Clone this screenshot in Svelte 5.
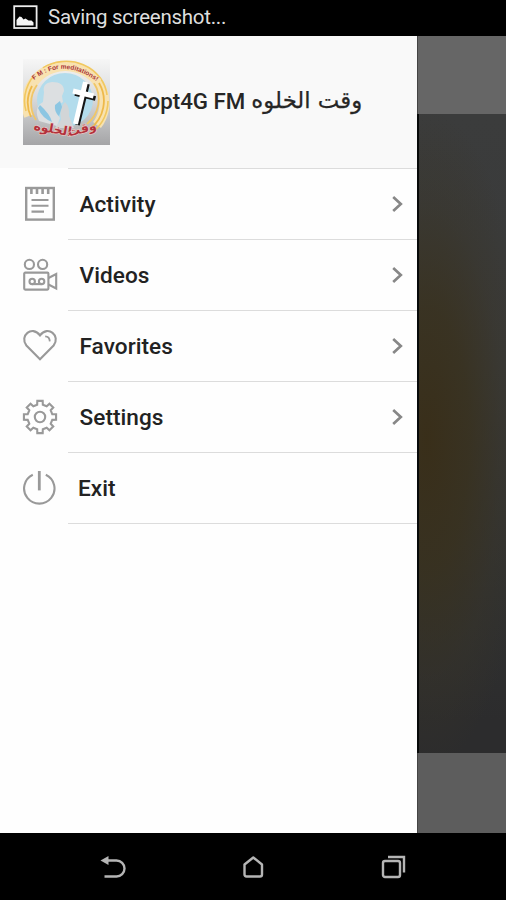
<script>
  const items = [
    { label: 'Activity', icon: 'activity', more: true },
    { label: 'Videos', icon: 'videos', more: true },
    { label: 'Favorites', icon: 'favorites', more: true },
    { label: 'Settings', icon: 'settings', more: true },
    { label: 'Exit', icon: 'exit', more: false }
  ];

  // Outline of an eight-toothed gear centred on 0,0
  const gear = (() => {
    const pts = [];
    for (let i = 0; i < 8; i++) {
      const base = i * 45;
      for (const [r, a] of [[12.6, -13], [16.3, -9.5], [16.3, 9.5], [12.6, 13]]) {
        const t = ((base + a) * Math.PI) / 180;
        pts.push(`${(r * Math.sin(t)).toFixed(2)} ${(-r * Math.cos(t)).toFixed(2)}`);
      }
    }
    return 'M' + pts.join('L') + 'Z';
  })();
</script>

<div class="screen">
  <header class="status">
    <svg class="photo" width="25" height="25" viewBox="0 0 25 25">
      <rect x="1.2" y="1.2" width="22.4" height="21.8" fill="none" stroke="#ececec" stroke-width="1.8" />
      <path d="M3.5 20.5V15l3-3.500 2 .5 2 2.500 2-1 3 2h3l2 2v3z" fill="#f4f4f4" />
    </svg>
    <span>Saving screenshot...</span>
  </header>

  <main>
    <nav class="drawer">
      <div class="profile">
        <svg class="logo" width="87" height="86" viewBox="0 0 87 86">
          <defs>
            <linearGradient id="bg" x1="0" y1="0" x2="0" y2="1">
              <stop offset="0" stop-color="#f6f6f6" />
              <stop offset=".45" stop-color="#d9dadb" />
              <stop offset="1" stop-color="#a5a5a7" />
            </linearGradient>
            <path id="top" d="M11 21Q42 -4 80 27" />
          </defs>
          <rect width="87" height="86" fill="url(#bg)" />
          <g fill="none">
            <path d="M6 57A39 37 0 1 1 74 66" stroke="#f8e2b0" stroke-width="10" />
            <path d="M3 52A41 39 0 0 1 16 12M20 9A41 38 0 0 1 84 36M85 42A41 41 0 0 1 71 72" stroke="#f1c860" stroke-width="1.6" />
            <path d="M8 58A37 36 0 0 1 9 27M76 24A37 36 0 0 1 67 70" stroke="#eeb94a" stroke-width="1.8" />
            <path d="M13 61A33 32 0 0 1 14 26M71 24A33 32 0 0 1 64 65" stroke="#f0c668" stroke-width="1.8" />
            <path d="M12 19Q42 -6 76 23" stroke="#f9e2b0" stroke-width="7" />
          </g>
          <ellipse cx="42" cy="41" rx="28" ry="27" fill="#b3dcec" />
          <path d="M21 33Q19 24 29 23Q41 23 41 32L39 37L40 43L35 46Q31 52 37 59L34 67L16 62Q10 48 20 43Z" fill="#dcdfe1" />
          <path d="M38 61Q36 49 42 43Q47 48 46 57L51 69H32Z" fill="#d2d5d7" />
          <path d="M17 46Q27 55 29 63Q19 59 15 49ZM32 46L37 42L39 48L36 57Q31 53 32 46Z" fill="#8cc6e2" />
          <path d="M64.5 25L54.5 66M52 34.5L72.5 39.5" stroke="#151515" stroke-width="4.6" />
          <path d="M62.5 23L52.5 65M50 32L70.5 37" stroke="#fff" stroke-width="5" />
          <g class="arabic" text-anchor="middle">
            <text transform="translate(29 74) rotate(10)">الخلوه</text>
            <text transform="translate(60 74) rotate(-14)">وقت</text>
          </g>
          <text class="tagline"><textPath href="#top">F M : For meditations!</textPath></text>
        </svg>
        <div class="name"><b>Copt4G FM</b><span lang="ar">وقت الخلوه</span></div>
      </div>

      {#each items as item}
        <div class="row" class:exit={item.icon === 'exit'}>
          <div class="icon">
            <svg width="36" height="36" viewBox="-18 -18 36 36">
              {#if item.icon === 'activity'}
                <rect x="-13.8" y="-16" width="27.6" height="31.6" stroke-width="2.4" />
                <path d="M-8.6 -15v5M-3 -15v5M2.6 -15v5M8.2 -15v5" stroke-width="2.6" />
                <path d="M-8.5 -4H8.5M-8.5 1.8H8.5M-8.5 7.6H4" />
              {:else if item.icon === 'videos'}
                <circle cx="-10.6" cy="-10.6" r="4.6" />
                <circle cx="2.6" cy="-10.6" r="4.6" />
                <rect x="-15.8" y="-2.4" width="24.2" height="17" rx="1" />
                <path d="M8.5 3L16.2 -1V13.5L8.5 9.5" />
                <circle cx="-7.8" cy="6.4" r="2.7" />
                <circle cx="1.6" cy="6.4" r="2.7" />
                <path d="M-7.8 9.1H1.6" />
              {:else if item.icon === 'favorites'}
                <path d="M0 13.2L-13.6 -.5C-21 -10 -8 -21.3 0 -10.6C8 -21.3 21 -10 13.6 -.5Z" />
                <path d="M5.2 -9.6Q9.6 -9.4 9.8 -4.6" stroke-width="1.8" />
              {:else if item.icon === 'settings'}
                <path d={gear} />
                <circle r="5.2" />
              {:else}
                <path d="M-7.2 -13.3A15.2 15.2 0 1 0 5.8 -13.3" />
                <path d="M-.7 -17V2.4" stroke-width="2.8" />
              {/if}
            </svg>
          </div>
          <div class="body">
            <span class="label">{item.label}</span>
            {#if item.more}
              <svg class="chevron" width="14" height="18" viewBox="0 0 14 18">
                <path d="M2.2 2L9.8 9L2.2 16" fill="none" stroke="#878787" stroke-width="2.7" />
              </svg>
            {/if}
          </div>
        </div>
      {/each}
    </nav>

    <div class="behind">
      <div class="bar top"></div>
      <div class="art"></div>
      <div class="bar bottom"></div>
    </div>
  </main>

  <footer>
    <svg width="28" height="26" viewBox="0 0 28 26">
      <path d="M6 6.5H16.5a7.8 7.8 0 0 1 0 16H4.5" />
      <path d="M.5 6.5L8.5 2V11Z" fill="#b5b5b5" stroke="none" />
    </svg>
    <svg width="28" height="26" viewBox="0 0 28 26">
      <path d="M4.5 10.5L13.3 3.5L22 10.5V20.5Q22 22.5 20 22.5H6.5Q4.5 22.5 4.5 20.5Z" stroke-linejoin="round" />
    </svg>
    <svg width="28" height="26" viewBox="0 0 28 26">
      <rect x="4" y="7" width="17" height="16" rx="2" />
      <path d="M9 3H25V18.5" />
    </svg>
  </footer>
</div>

<style>
  :global(body) {
    margin: 0;
    background: #000;
  }
  .screen {
    display: flex;
    flex-direction: column;
    width: 506px;
    height: 900px;
    overflow: hidden;
    background: #000;
    font-family: Roboto, 'Noto Sans', sans-serif;
  }
  .status {
    display: flex;
    align-items: center;
    box-sizing: border-box;
    height: 36px;
    padding: 0 0 2px 13px;
    gap: 10px;
    color: #dedede;
    font-size: 20.5px;
    letter-spacing: -0.28px;
    white-space: nowrap;
  }
  main {
    display: flex;
    height: 797px;
  }
  .drawer {
    width: 417px;
    background: #fefefe;
  }
  .profile {
    display: flex;
    align-items: center;
    box-sizing: border-box;
    height: 132px;
    padding-left: 23px;
    gap: 23px;
    background: #f9f9f9;
  }
  .name {
    display: flex;
    align-items: baseline;
    gap: 6px;
    margin-top: -3px;
    color: #262626;
    font-size: 22.3px;
    white-space: nowrap;
  }
  .name b {
    font-weight: 500;
  }
  .name span {
    position: relative;
    top: -1px;
    font-family: 'DejaVu Sans', sans-serif;
    font-size: 22.8px;
    -webkit-text-stroke: 0.25px #262626;
  }
  .tagline {
    font: bold 6.5px 'Liberation Sans', sans-serif;
    fill: #a83238;
  }
  .arabic {
    font: bold 12.5px 'DejaVu Sans', sans-serif;
    fill: #b3313b;
    stroke: #e9c9c4;
    stroke-width: 1.2;
    paint-order: stroke;
  }
  .row {
    display: flex;
    height: 71px;
  }
  .icon {
    display: flex;
    align-items: center;
    box-sizing: border-box;
    width: 68px;
    padding-left: 22px;
  }
  .icon svg {
    fill: none;
    stroke: #999;
    stroke-width: 2.1;
  }
  .body {
    display: flex;
    flex: 1;
    align-items: center;
    justify-content: space-between;
    box-sizing: border-box;
    padding: 0 12px 0 11.5px;
    border-top: 1px solid #dcdcdc;
  }
  .row.exit .body {
    height: 72px;
    padding-left: 10px;
    border-bottom: 1px solid #dcdcdc;
  }
  .chevron {
    margin-right: 0.5px;
  }
  .label {
    color: #222;
    font-size: 22.6px;
    font-weight: 500;
    letter-spacing: 0.05px;
  }
  .behind {
    display: flex;
    flex: 1;
    flex-direction: column;
  }
  .bar {
    border-left: 1px solid #444;
  }
  .top {
    height: 78px;
    background: #666;
  }
  .art {
    flex: 1;
    border-left: 2px solid #080a0a;
    background:
      radial-gradient(ellipse 105px 330px at 8px 325px, rgba(57, 46, 24, 0.95) 0%, rgba(57, 49, 29, 0.8) 40%, rgba(57, 52, 38, 0.4) 72%, transparent 100%),
      linear-gradient(#3b3c3c, #393a3a 40%, #303131 75%, #2c2c2d 95%);
  }
  .bottom {
    height: 80px;
    background: #5d5d5d;
  }
  footer {
    display: flex;
    flex: 1;
    align-items: center;
    justify-content: space-between;
    padding: 0 99px 0 100px;
  }
  footer svg {
    fill: none;
    stroke: #b5b5b5;
    stroke-width: 2.4;
  }
</style>
